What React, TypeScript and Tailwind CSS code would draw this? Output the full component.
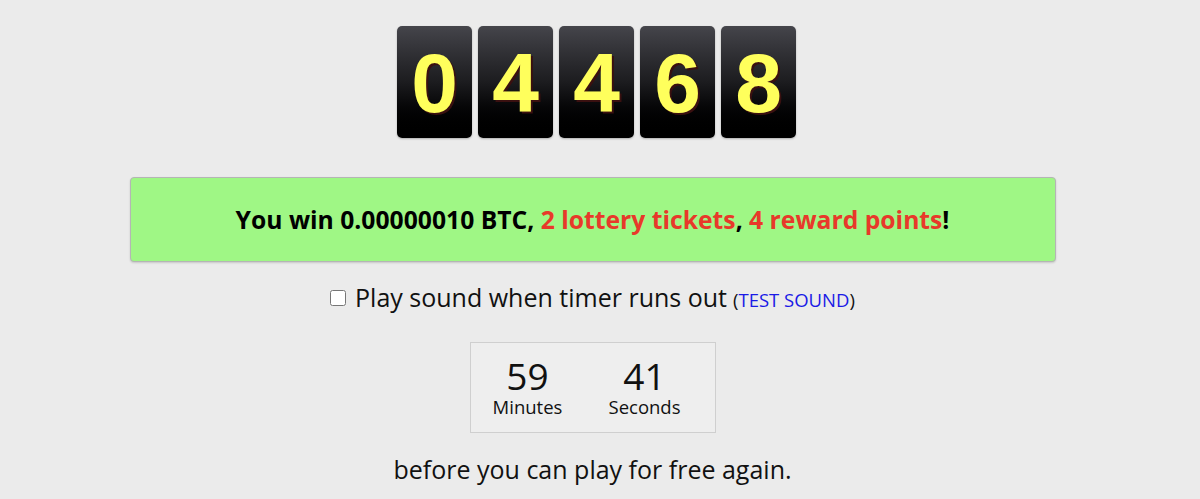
const digits = ["0", "4", "4", "6", "8"];

const DigitTile = ({ value }: { value: string }) => {
    return (
        <div className="flex items-center justify-center w-[75px] h-[112px] rounded-[5px] bg-gradient-to-b from-[#45454b] via-[#1c1c1f] to-[#000000] shadow-[0_1px_2px_rgba(0,0,0,0.25)]">
            <span
                className="text-[84px] leading-none font-bold text-[#ffff5c] [text-shadow:2px_2px_0_#3a1010] pt-[2px]"
                style={{ fontFamily: '"Liberation Sans", Arial, sans-serif' }}
            >
                {value}
            </span>
        </div>
    );
};

const App = () => {
    return (
        <div className="min-h-[499px] bg-[#ebebeb]" style={{ fontFamily: '"Open Sans", sans-serif' }}>
            <div className="w-[1185px] flex flex-col items-center pt-[26px]">
                <div className="flex gap-[6px] ml-[8px]">
                    {digits.map((d, i) => (
                        <DigitTile key={i} value={d} />
                    ))}
                </div>

                <div className="mt-[39px] w-[926px] h-[85px] flex items-center justify-center rounded-[4px] border border-[#b5b5b5] bg-[#9ff785] shadow-[0_1px_2px_rgba(0,0,0,0.15)]">
                    <p className="text-[24.7px] font-bold text-black">
                        You win 0.00000010 BTC, <span className="text-[#e8392a]">2 lottery tickets</span>, <span className="text-[#e8392a]">4 reward points</span>!
                    </p>
                </div>

                <div className="mt-[18px] flex items-center text-[#111] h-[36px]">
                    <input type="checkbox" className="w-[16px] h-[16px] mr-[9px]" />
                    <span className="text-[25px]">Play sound when timer runs out</span>
                    <span className="text-[18.5px] ml-[6px] mt-[3px]">
                        (<a className="text-[#1a1ae6] cursor-pointer">TEST SOUND</a>)
                    </span>
                </div>

                <div className="mt-[26px] w-[246px] h-[91px] flex items-center pl-[22px] gap-[47px] border border-[#cfcfcf] bg-[#eeeeee]">
                    <div className="flex flex-col items-center w-[70px]">
                        <span className="text-[37px] leading-[38px] text-[#111]">59</span>
                        <span className="text-[18.5px] leading-[24px] text-[#111]">Minutes</span>
                    </div>
                    <div className="flex flex-col items-center w-[70px]">
                        <span className="text-[37px] leading-[38px] text-[#111]">41</span>
                        <span className="text-[18.5px] leading-[24px] text-[#111]">Seconds</span>
                    </div>
                </div>

                <p className="mt-[18px] text-[25px] leading-[36px] text-[#111]">before you can play for free again.</p>
            </div>
        </div>
    );
};

export default App;
